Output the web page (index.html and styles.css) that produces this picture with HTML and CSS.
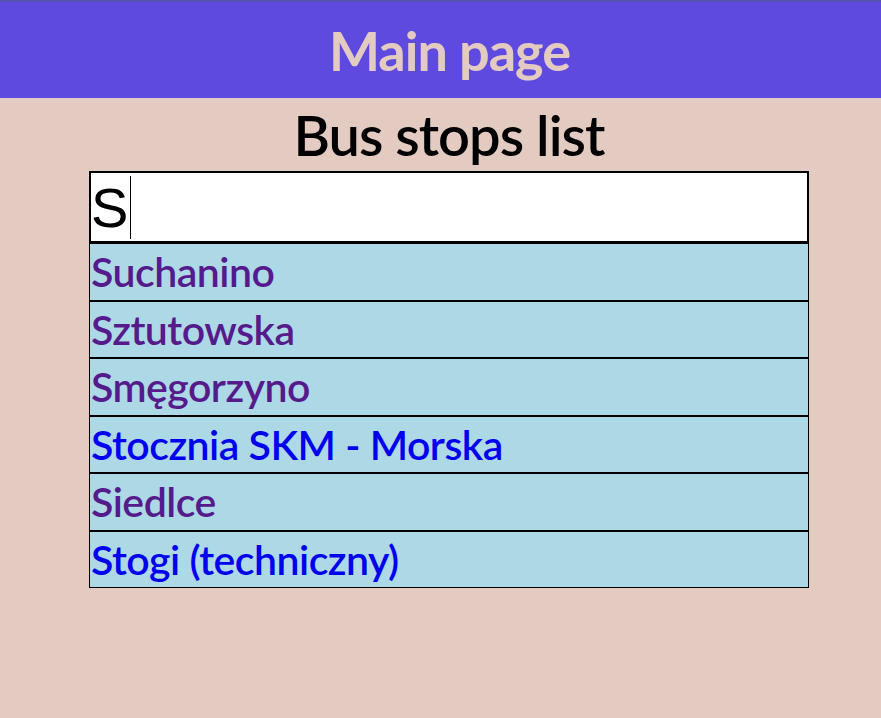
FILE: index.html
```html
<!DOCTYPE html>
<html>
<head>
<meta charset="utf-8">
<link rel="stylesheet" href="styles.css">
</head>
<body>
<header class="topbar"><h1 class="brand">Main page</h1></header>
<main class="content">
  <h2 class="title">Bus stops list</h2>
  <div class="search"><span class="search-text">S</span><span class="caret"></span></div>
  <ul class="stops">
    <li class="stop"><a class="link visited" href="#">Suchanino</a></li>
    <li class="stop"><a class="link visited" href="#">Sztutowska</a></li>
    <li class="stop"><a class="link visited" href="#">Smęgorzyno</a></li>
    <li class="stop"><a class="link" href="#">Stocznia SKM - Morska</a></li>
    <li class="stop"><a class="link visited" href="#">Siedlce</a></li>
    <li class="stop"><a class="link" href="#">Stogi (techniczny)</a></li>
  </ul>
</main>
</body>
</html>
```
FILE: styles.css
```css
html, body {
  margin: 0;
  padding: 0;
}
body {
  background: #e3cbc2;
  font-family: Lato, "Noto Sans", sans-serif;
  min-height: 718px;
}
.topbar {
  background: #5f4ae0;
  border-top: 2px solid #5553b0;
  height: 96px;
  display: flex;
  align-items: center;
  justify-content: center;
  padding-left: 18px;
}
.brand {
  margin: 0;
  color: #e3cbc2;
  font-size: 54px;
  font-weight: 700;
  letter-spacing: -1px;
}
.content {
  display: flex;
  flex-direction: column;
  align-items: flex-start;
  padding-left: 89px;
}
.title {
  margin: 6px 0 5px;
  width: 720px;
  text-align: center;
  font-size: 56px;
  line-height: 62px;
  font-weight: 600;
  color: #000;
  letter-spacing: -1px;
}
.search {
  box-sizing: border-box;
  width: 720px;
  height: 72px;
  background: #fff;
  border: 2px solid #000;
  display: flex;
  align-items: center;
  padding-left: 0;
  font-family: "Liberation Sans", Arial, sans-serif;
  font-size: 56px;
  color: #000;
}
.caret {
  display: inline-block;
  width: 1px;
  height: 63px;
  background: #000;
  margin-left: 2px;
}
.stops {
  list-style: none;
  margin: 0;
  padding: 0;
  width: 720px;
}
.stop {
  box-sizing: border-box;
  height: 57.5px;
  background: #add8e6;
  border: 1px solid #000;
  display: flex;
  align-items: center;
  padding-left: 1px;
}
.link {
  text-decoration: none;
  color: #0000ee;
  font-size: 41px;
  line-height: 48px;
  font-weight: 600;
  letter-spacing: -0.5px;
  margin-top: 1px;
}
.link.visited {
  color: #551a8b;
}
```
